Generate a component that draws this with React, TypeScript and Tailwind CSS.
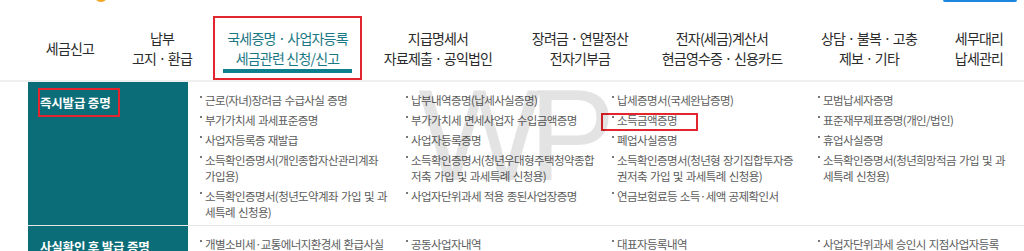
import React from "react";

const KR = { fontFamily: '"Noto Sans CJK KR", "Noto Sans", sans-serif' };

type NavItem = { lines: string[]; w: string; active?: boolean; extra?: string };

const nav: NavItem[] = [
  { lines: ["세금신고"], w: "w-[100px]" },
  { lines: ["납부", "고지 · 환급"], w: "w-[84px]", extra: "mr-[9px]" },
  { lines: ["국세증명 · 사업자등록", "세금관련 신청/신고"], w: "w-[149px]", active: true },
  { lines: ["지급명세서", "자료제출 · 공익법인"], w: "w-[152px]" },
  { lines: ["장려금 · 연말정산", "전자기부금"], w: "w-[132px]" },
  { lines: ["전자(세금)계산서", "현금영수증 · 신용카드"], w: "w-[152px]" },
  { lines: ["상담 · 불복 · 고충", "제보 · 기타"], w: "w-[142px]" },
  { lines: ["세무대리", "납세관리"], w: "w-[78px]" },
];

type Item = { lines: string[]; mark?: boolean };

const row1: Item[] = [
  { lines: ["근로(자녀)장려금 수급사실 증명"] },
  { lines: ["납부내역증명(납세사실증명)"] },
  { lines: ["납세증명서(국세완납증명)"] },
  { lines: ["모범납세자증명"] },
  { lines: ["부가가치세 과세표준증명"] },
  { lines: ["부가가치세 면세사업자 수입금액증명"] },
  { lines: ["소득금액증명"], mark: true },
  { lines: ["표준재무제표증명(개인/법인)"] },
  { lines: ["사업자등록증 재발급"] },
  { lines: ["사업자등록증명"] },
  { lines: ["폐업사실증명"] },
  { lines: ["휴업사실증명"] },
  { lines: ["소득확인증명서(개인종합자산관리계좌", "가입용)"] },
  { lines: ["소득확인증명서(청년우대형주택청약종합", "저축 가입 및 과세특례 신청용)"] },
  { lines: ["소득확인증명서(청년형 장기집합투자증", "권저축 가입 및 과세특례 신청용)"] },
  { lines: ["소득확인증명서(청년희망적금 가입 및 과", "세특례 신청용)"] },
  { lines: ["소득확인증명서(청년도약계좌 가입 및 과", "세특례 신청용)"] },
  { lines: ["사업자단위과세 적용 종된사업장증명"] },
  { lines: ["연금보험료등 소득·세액 공제확인서"] },
];

const row2: Item[] = [
  { lines: ["개별소비세·교통에너지환경세 환급사실"] },
  { lines: ["공동사업자내역"] },
  { lines: ["대표자등록내역"] },
  { lines: ["사업자단위과세 승인시 지점사업자등록"] },
];

function ListItem({ item }: { item: Item }) {
  return (
    <div className="relative flex items-start">
      {item.mark && (
        <span className="pointer-events-none absolute left-[-11px] top-[1px] h-[18px] w-[97px] border-2 border-[#e3262d]" />
      )}
      <span className="mr-[3px] mt-[4px] h-[2px] w-[2px] shrink-0 bg-[#777]" />
      <div>
        {item.lines.map((l, i) => (
          <div key={i} className="whitespace-nowrap">
            {l}
          </div>
        ))}
      </div>
    </div>
  );
}

function Row({ title, items, boxed, last }: { title: string; items: Item[]; boxed?: boolean; last?: boolean }) {
  return (
    <div className={`flex ${last ? "" : "border-b border-[#e6e6e6]"}`}>
      <div className="w-[160px] shrink-0 bg-[#0b6d78] pl-[10px] pt-[6px]">
        <span
          className={`inline-block border-2 ${boxed ? "border-[#e3262d]" : "border-transparent"} pr-[8px] py-[3px] text-[12.5px] font-bold leading-[19px] tracking-[-0.2px] text-white`}
        >
          {title}
        </span>
      </div>
      <div className="grid flex-1 grid-cols-[206px_206px_206px_206px] content-start gap-y-[4px] pb-[5px] pl-[12px] pt-[10px] text-[11.5px] leading-[16px] tracking-[-0.6px] text-[#5c5c5c] [word-spacing:1px]">
        {items.map((it, i) => (
          <ListItem key={i} item={it} />
        ))}
      </div>
    </div>
  );
}

export default function App() {
  return (
    <div className="relative h-[251px] w-[1024px] overflow-hidden bg-white" style={KR}>
      {/* cut-off header elements */}
      <div className="relative flex h-[16px] items-start">
        <div className="ml-[94px] mt-[-12px] h-[14px] w-[14px] rounded-full bg-[#f6a623]" />
        <div className="ml-auto mr-[7px] mt-[-12px] h-[14px] w-[74px] rounded-[2px] border-2 border-[#1c86df]" />
      </div>
      {/* nav */}
      <nav className="flex pl-[20px] text-[14px] leading-[20px] tracking-[-0.8px] text-[#2b2b2b]">
        {nav.map((n, i) => (
          <div
            key={i}
            className={`relative flex h-[64px] shrink-0 flex-col items-center justify-center ${n.w} ${n.extra ?? ""} ${
              n.active ? "border-2 border-[#e3262d] text-[#1b7884]" : ""
            }`}
          >
            {n.lines.map((l, j) => (
              <div key={j} className="whitespace-nowrap">
                {l}
              </div>
            ))}
            {n.active && <span className="absolute bottom-[5px] left-[8px] right-[8px] h-[4px] bg-[#0f808d]" />}
          </div>
        ))}
      </nav>
      <div className="h-[2px] bg-[#efefef]" />
      {/* content */}
      <div className="ml-[28px]">
        <Row title="즉시발급 증명" items={row1} boxed />
        <Row title="사실확인 후 발급 증명" items={row2} last />
      </div>
      {/* watermark */}
      <div
        className="pointer-events-none absolute left-[418px] top-[70px] select-none text-[130px] leading-none tracking-[-12px] text-black/[0.11]"
        style={{ fontFamily: '"Liberation Sans", sans-serif' }}
      >
        WP
      </div>
    </div>
  );
}
